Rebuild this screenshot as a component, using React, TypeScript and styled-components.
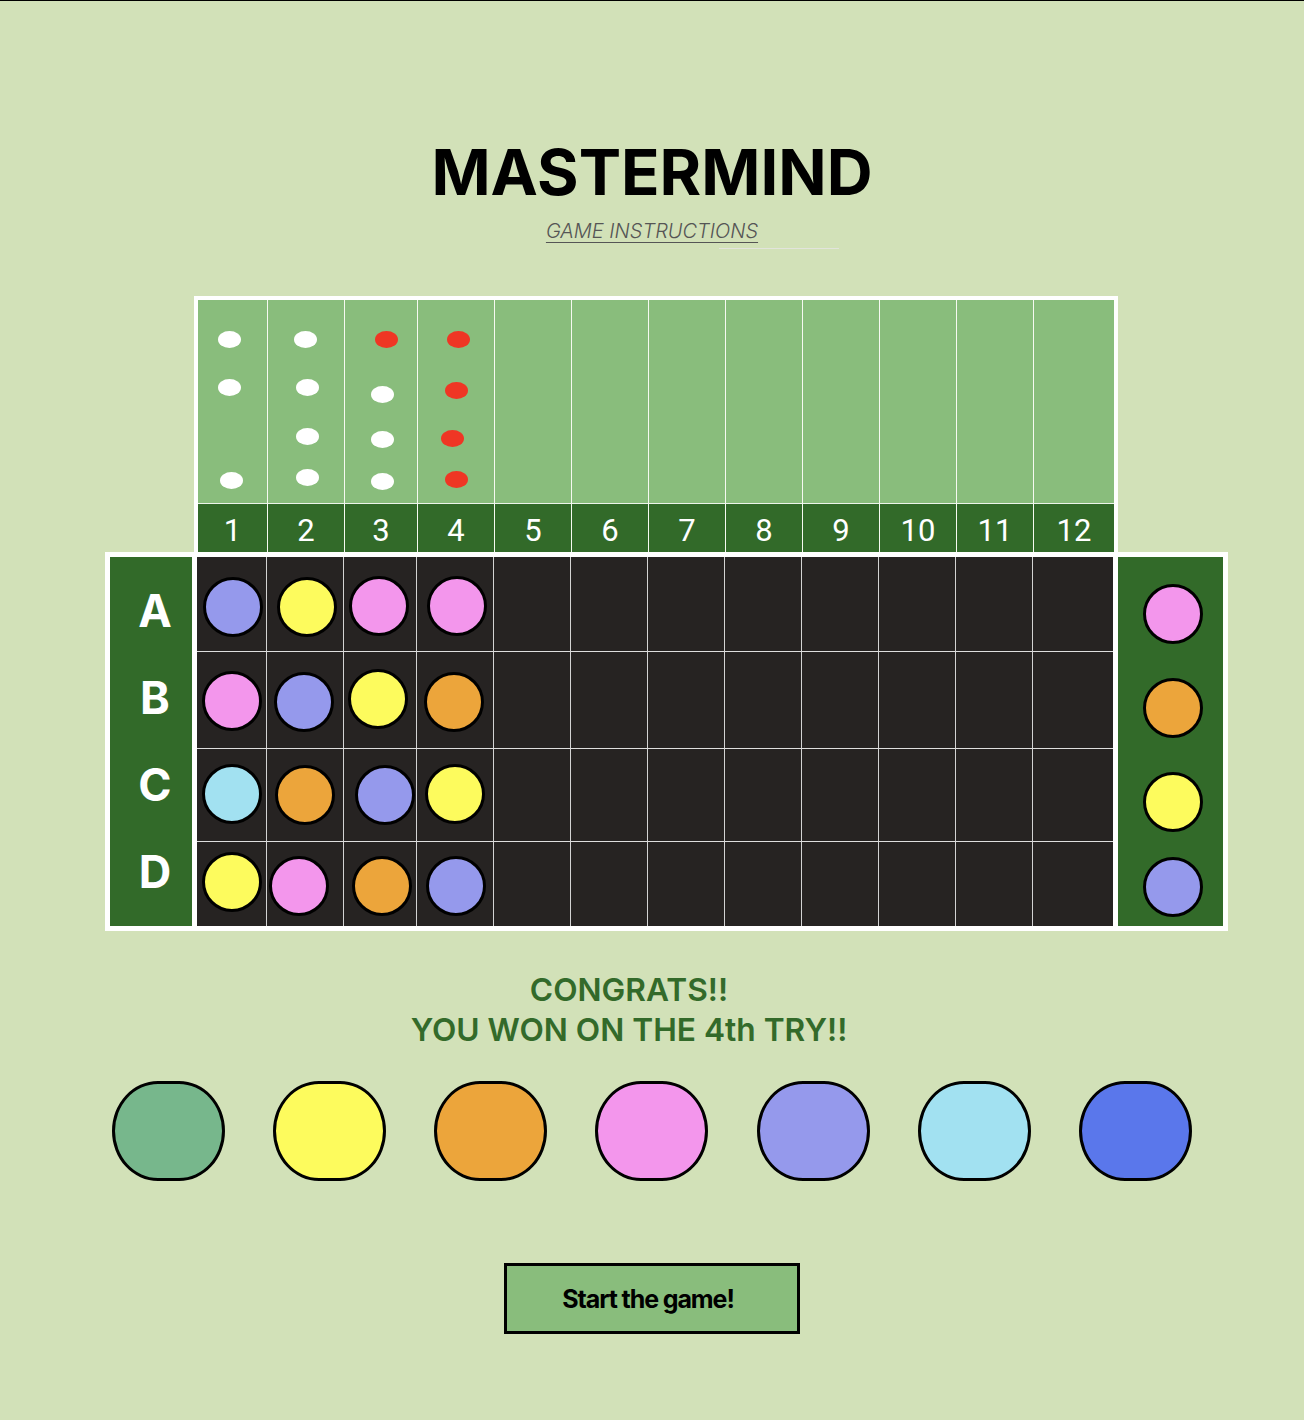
import React from "react";
import styled, { createGlobalStyle } from "styled-components";

const GlobalStyle = createGlobalStyle`
  html, body { margin: 0; padding: 0; background: #d2e1b8; }
  body { font-family: Inter, "Noto Sans", sans-serif; }
  * { box-sizing: border-box; }
`;

const COLORS: Record<string, string> = {
  lav: "#9599ec",
  yel: "#fdfb5d",
  pink: "#f396ec",
  orange: "#eca53b",
  cyan: "#a2e1f1",
  green: "#77b78c",
  blue: "#5a77eb",
};

const COL_TEMPLATE = "69px 77px 73px 77px repeat(7, 77px) 81px";

const Page = styled.div`
  min-height: 1420px;
  background: #d2e1b8;
  border-top: 1px solid #000;
  padding-top: 139px;
  display: flex;
  flex-direction: column;
  align-items: center;
`;

const Title = styled.h1`
  margin: 0;
  font-family: Inter, sans-serif;
  font-weight: 700;
  font-size: 63.5px;
  line-height: 64px;
  color: #000;
`;

const InstructionsLink = styled.a`
  position: relative;
  margin-top: 17px;
  font-family: Inter, sans-serif;
  font-style: italic;
  font-weight: 300;
  font-size: 20px;
  line-height: 20px;
  color: #555;
  text-decoration: underline;
  text-decoration-thickness: 1px;
  text-underline-offset: 4px;
  cursor: pointer;
  &::after {
    content: "";
    position: absolute;
    left: 173px;
    top: 27px;
    width: 120px;
    height: 1px;
    background: #e2e4dc;
  }
`;

const Board = styled.div`
  align-self: flex-start;
  margin-left: 105px;
  margin-top: 55px;
  width: 1123px;
  display: flex;
  flex-direction: column;
`;

const TopSection = styled.div`
  margin-left: 89px;
  width: 924px;
  border: 4px solid #fff;
  border-bottom: 0;
  display: grid;
  grid-template-columns: ${COL_TEMPLATE};
`;

const TopColumn = styled.div<{ $first?: boolean }>`
  display: flex;
  flex-direction: column;
  border-left: ${(p) => (p.$first ? "0" : "1px solid rgba(255,255,255,0.8)")};
`;

const HintCell = styled.div`
  height: 204px;
  background: #89bd7c;
  border-bottom: 1px solid rgba(255, 255, 255, 0.85);
  display: grid;
  grid-template-rows: 50px 48px 42px 17px;
  justify-items: center;
  padding-top: 31px;
`;

const Peg = styled.div<{ $red?: boolean }>`
  width: 23px;
  height: 17px;
  border-radius: 50%;
  background: ${(p) => (p.$red ? "#ef3624" : "#ffffff")};
`;

const NumberCell = styled.div`
  height: 48px;
  background: #326a29;
  color: #fff;
  font-family: Roboto, "Liberation Sans", sans-serif;
  font-size: 31px;
  line-height: 48px;
  padding-top: 3px;
  text-align: center;
`;

const MainSection = styled.div`
  width: 1123px;
  border: 5px solid #fff;
  display: flex;
  height: 379px;
`;

const LetterColumn = styled.div`
  width: 87px;
  background: #326a29;
  border-right: 5px solid #fff;
  display: flex;
  flex-direction: column;
  padding: 10px 0 12px 8px;
`;

const Letter = styled.div`
  height: 87px;
  flex: none;
  line-height: 87px;
  text-align: center;
  color: #fff;
  font-family: Inter, sans-serif;
  font-weight: 700;
  font-size: 45px;
`;

const GuessGrid = styled.div`
  width: 916px;
  background: #262322;
  display: grid;
  grid-template-columns: ${COL_TEMPLATE};
  grid-template-rows: 94px 97px 93px 85px;
`;

const GridCell = styled.div<{ $left: boolean; $top: boolean }>`
  border-left: ${(p) => (p.$left ? "1px solid rgba(255,255,255,0.8)" : "0")};
  border-top: ${(p) => (p.$top ? "1px solid rgba(255,255,255,0.85)" : "0")};
  display: flex;
  align-items: center;
  justify-content: center;
`;

const Ball = styled.div<{ $color: string }>`
  width: 60px;
  height: 60px;
  border-radius: 50%;
  border: 3px solid #000;
  background: ${(p) => p.$color};
  flex: none;
`;

const SolutionColumn = styled.div`
  width: 110px;
  background: #326a29;
  border-left: 5px solid #fff;
  display: flex;
  flex-direction: column;
  padding: 27px 0 0 5px;
`;

const SolutionSlot = styled.div<{ $h: number }>`
  height: ${(p) => p.$h}px;
  flex: none;
  display: flex;
  justify-content: center;
  align-items: flex-start;
`;

const Congrats = styled.div`
  margin-top: 39px;
  padding-right: 46px;
  text-align: center;
  color: #336a2a;
  font-family: Inter, sans-serif;
  font-weight: 600;
  font-size: 31.7px;
  line-height: 40px;
`;

const Palette = styled.div`
  margin-top: 31px;
  width: 1080px;
  display: flex;
  justify-content: space-between;
`;

const PaletteChip = styled.div<{ $color: string }>`
  width: 113px;
  height: 100px;
  border: 3px solid #000;
  border-radius: 46px / 50px;
  background: ${(p) => p.$color};
`;

const StartButton = styled.button`
  margin-top: 82px;
  width: 296px;
  height: 71px;
  border: 3px solid #000;
  background: #89bd7c;
  color: #000;
  font-family: Inter, sans-serif;
  font-weight: 700;
  font-size: 25px;
  letter-spacing: -1.1px;
  padding: 0 8px 0 0;
  cursor: pointer;
`;

type PegDef = { red?: boolean; dx?: number; dy?: number } | null;

const hints: PegDef[][] = [
  [{ dx: -3 }, { dx: -3, dy: -2 }, null, { dx: -1, dy: 1 }],
  [{ dx: -1 }, { dx: 1, dy: -2 }, { dx: 1, dy: -1 }, { dx: 1, dy: -2 }],
  [{ red: true, dx: 5 }, { dx: 1, dy: 5 }, { dx: 1, dy: 2 }, { dx: 1, dy: 2 }],
  [{ red: true, dx: 2 }, { red: true, dy: 1 }, { red: true, dx: -4, dy: 1 }, { red: true }],
];

type BallDef = { c: string; dx: number; dy: number };

const guesses: BallDef[][] = [
  [
    { c: "lav", dx: 1, dy: 3 },
    { c: "yel", dx: 2, dy: 3 },
    { c: "pink", dx: -1, dy: 2 },
    { c: "pink", dx: 2, dy: 2 },
  ],
  [
    { c: "pink", dx: 0, dy: 1 },
    { c: "lav", dx: -1, dy: 2 },
    { c: "yel", dx: -2, dy: -1 },
    { c: "orange", dx: -1, dy: 2 },
  ],
  [
    { c: "cyan", dx: 0, dy: -1 },
    { c: "orange", dx: 0, dy: 0 },
    { c: "lav", dx: 5, dy: 0 },
    { c: "yel", dx: 0, dy: -1 },
  ],
  [
    { c: "yel", dx: 0, dy: -2 },
    { c: "pink", dx: -6, dy: 2 },
    { c: "orange", dx: 2, dy: 2 },
    { c: "lav", dx: 1, dy: 2 },
  ],
];

const solution = [
  { c: "pink", h: 94 },
  { c: "orange", h: 94 },
  { c: "yel", h: 85 },
  { c: "lav", h: 70 },
];
const letters = ["A", "B", "C", "D"];
const palette = ["green", "yel", "orange", "pink", "lav", "cyan", "blue"];
const columns = Array.from({ length: 12 }, (_, i) => i + 1);

export default function App() {
  return (
    <>
      <GlobalStyle />
      <Page>
        <Title>MASTERMIND</Title>
        <InstructionsLink>GAME INSTRUCTIONS</InstructionsLink>

        <Board>
          <TopSection>
            {columns.map((n, ci) => (
              <TopColumn key={n} $first={ci === 0}>
                <HintCell>
                  {(hints[ci] || []).map((p, pi) =>
                    p ? (
                      <Peg
                        key={pi}
                        $red={p.red}
                        style={{ transform: `translate(${p.dx || 0}px, ${p.dy || 0}px)` }}
                      />
                    ) : (
                      <div key={pi} />
                    )
                  )}
                </HintCell>
                <NumberCell>{n}</NumberCell>
              </TopColumn>
            ))}
          </TopSection>

          <MainSection>
            <LetterColumn>
              {letters.map((l) => (
                <Letter key={l}>{l}</Letter>
              ))}
            </LetterColumn>

            <GuessGrid>
              {letters.map((l, ri) =>
                columns.map((n, ci) => {
                  const b = guesses[ri][ci];
                  return (
                    <GridCell key={`${l}${n}`} $left={ci > 0} $top={ri > 0}>
                      {b && (
                        <Ball
                          $color={COLORS[b.c]}
                          style={{ transform: `translate(${b.dx}px, ${b.dy}px)` }}
                        />
                      )}
                    </GridCell>
                  );
                })
              )}
            </GuessGrid>

            <SolutionColumn>
              {solution.map((s, i) => (
                <SolutionSlot key={i} $h={s.h}>
                  <Ball $color={COLORS[s.c]} />
                </SolutionSlot>
              ))}
            </SolutionColumn>
          </MainSection>
        </Board>

        <Congrats>
          CONGRATS!!
          <br />
          YOU WON ON THE 4th TRY!!
        </Congrats>

        <Palette>
          {palette.map((c) => (
            <PaletteChip key={c} $color={COLORS[c]} />
          ))}
        </Palette>

        <StartButton>Start the game!</StartButton>
      </Page>
    </>
  );
}
